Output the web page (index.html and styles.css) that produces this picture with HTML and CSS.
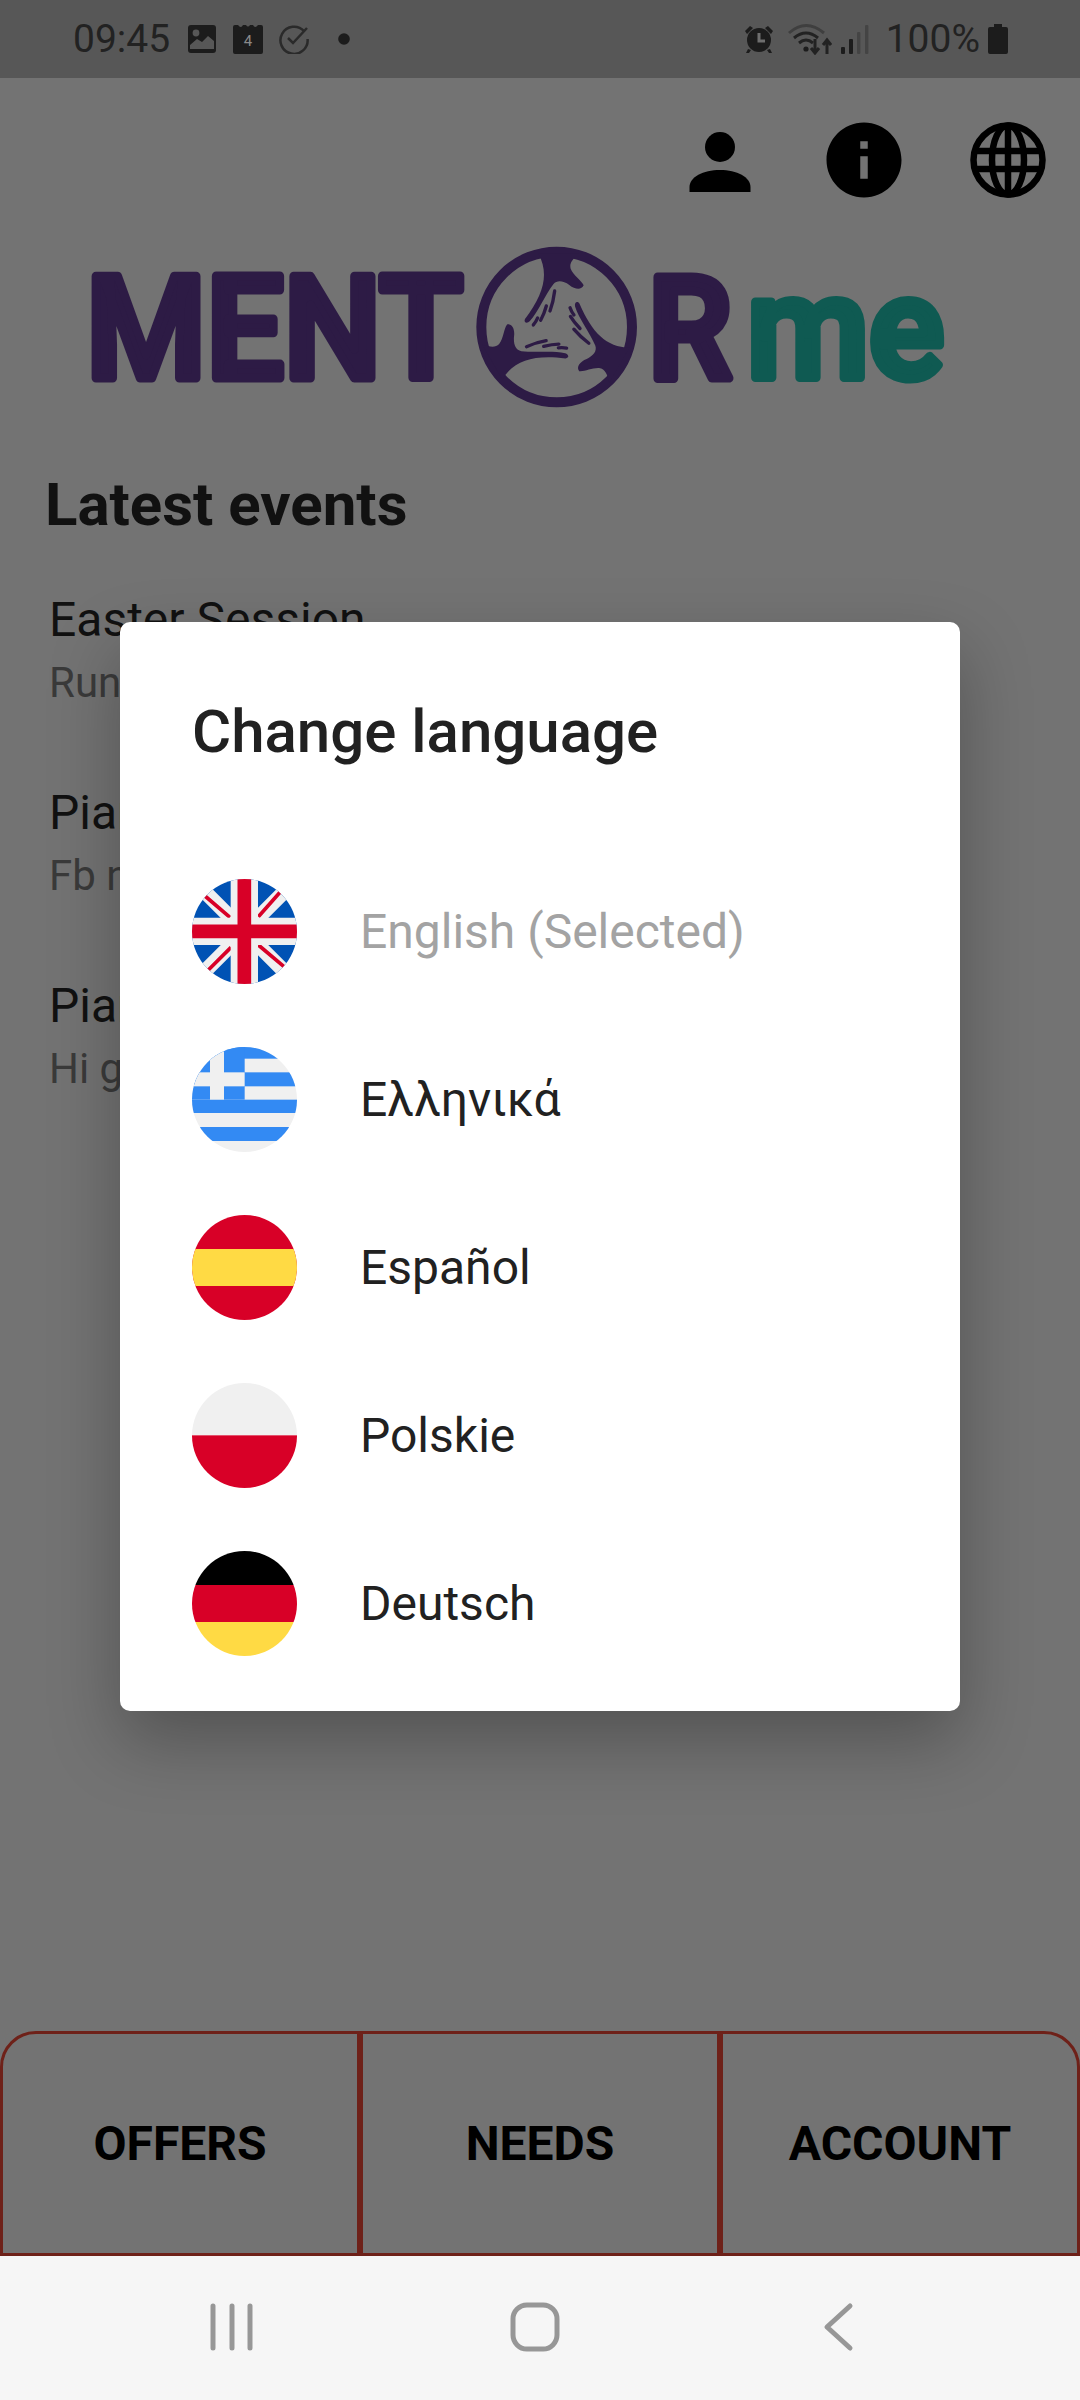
FILE: index.html
```html
<!DOCTYPE html>
<html lang="en">
<head>
    <meta charset="UTF-8">
    <meta name="viewport" content="width=device-width, initial-scale=1.0">
    <title>MENTORme</title>
    <link rel="stylesheet" href="styles.css">
</head>
<body>
    <div id="screen">
        <div class="status-bar">
            <div class="status-group">
                <span class="status-time">09:45</span>
                <svg class="status-icon" viewBox="0 0 30 30"><rect x="1" y="1" width="28" height="28" rx="3" class="ic-dark"/><circle cx="9" cy="9" r="3.4" class="ic-cut"/><path d="M3 25v-4l7-6 5 3 6-6 6 5v8z" class="ic-cut"/></svg>
                <svg class="status-icon" viewBox="0 0 30 30"><path d="M0 3q0-2 2-2h3q3 4 5 0h3q2 3 4 0h3q2 4 5 0h3q2 0 2 2v25q0 2-2 2H2q-2 0-2-2z" class="ic-dark"/><text x="15" y="22" class="cal-day">4</text></svg>
                <svg class="status-icon" viewBox="0 0 30 30"><path d="M25 7A13.6 13.6 0 1 0 28.6 15" class="ic-line"/><path d="M9 14l5 5L28 4" class="ic-line"/></svg>
                <svg class="status-dot" viewBox="0 0 12 12"><circle cx="6" cy="6" r="5.8" class="ic-dark"/></svg>
            </div>
            <div class="status-group">
                <svg class="status-icon" viewBox="0 0 30 30"><circle cx="15" cy="16" r="12" class="ic-dark"/><path d="M1 7l5-5 3 2-6 6zM29 7l-5-5-3 2 6 6zM4 25l-2 4h3l2-3zM26 25l2 4h-3l-2-3z" class="ic-dark"/><path d="M15 9v8h6" class="ic-mark"/></svg>
                <svg class="status-wifi" viewBox="0 0 44 32"><path d="M1 10Q18-5 36 10" class="ic-soft"/><path d="M6 15Q18 5 30 15M11 20Q18 14 25 20" class="ic-line2"/><circle cx="18" cy="26" r="2.6" class="ic-dark"/><path d="M27 16v13M23 25l4 5 4-5M39 31V18M35 22l4-5 4 5" class="ic-line2"/></svg>
                <svg class="status-signal" viewBox="0 0 28 30"><rect x="0" y="23" width="4" height="7" rx="1" class="ic-dark"/><rect x="8" y="15" width="4" height="15" rx="1" class="ic-dark"/><rect x="16" y="8" width="3.4" height="22" rx="1" class="ic-faint"/><rect x="24" y="1" width="3.4" height="29" rx="1" class="ic-faint"/></svg>
                <span class="status-pct">100%</span>
                <svg class="status-batt" viewBox="0 0 20 30"><path d="M6 0h8v3h4q2 0 2 2v23q0 2-2 2H2q-2 0-2-2V5q0-2 2-2h4z" class="ic-dark"/></svg>
            </div>
        </div>

        <div class="top-actions">
            <svg class="action" viewBox="0 0 90 90"><circle cx="45" cy="32" r="15"/><path d="M14.500 77V72C14.500 62 28 55 45 55S75.500 62 75.500 72V77z"/></svg>
            <svg class="action" viewBox="0 0 24 24"><path d="M12 2C6.480 2 2 6.480 2 12s4.480 10 10 10 10-4.480 10-10S17.520 2 12 2zm1 15h-2v-6h2v6zm0-8h-2V7h2v2z"/></svg>
            <svg class="action globe" viewBox="0 0 90 90"><circle cx="45" cy="45" r="34.500"/><ellipse cx="45" cy="45" rx="16" ry="34.500"/><path d="M45 10v70M12 36h66M12 54h66"/></svg>
        </div>

        <svg class="logo" viewBox="0 0 1080 200">
            <defs>
                <path id="hand" d="M205 40C238 100 222 160 165 236C160 248 172 250 179 243C205 215 225 165 250 132C262 118 280 122 298 134C315 148 335 150 341 135C335 120 310 105 302 85C298 70 305 60 325 40Z"/>
                <g id="hand-fingers">
                    <use href="#hand"/>
                    <path d="M254 152Q250 185 240 212M229 197Q222 222 212 240M203 233Q198 245 190 254" class="logo-finger"/>
                </g>
            </defs>
            <text x="86" y="162" textLength="377" lengthAdjust="spacingAndGlyphs" class="logo-word purple">MENT</text>
            <g transform="translate(470 24.300) scale(.3333)">
                <circle cx="260" cy="260" r="226" class="logo-ring"/>
                <use href="#hand-fingers"/>
                <use href="#hand-fingers" transform="rotate(120 260 260)"/>
                <use href="#hand-fingers" transform="rotate(240 260 260)"/>
            </g>
            <text x="648" y="162" textLength="84" lengthAdjust="spacingAndGlyphs" class="logo-word purple">R</text>
            <text x="747" y="162" textLength="197" lengthAdjust="spacingAndGlyphs" class="logo-word green">me</text>
        </svg>

        <h2 class="section-title">Latest events</h2>
        <div class="events">
            <div class="event">
                <div class="event-title">Easter Session</div>
                <div class="event-text">Run</div>
            </div>
            <div class="event">
                <div class="event-title">Pian</div>
                <div class="event-text">Fb n</div>
            </div>
            <div class="event">
                <div class="event-title">Pian</div>
                <div class="event-text">Hi g</div>
            </div>
        </div>

        <div class="tabs">
            <div class="tab tab-first">OFFERS</div>
            <div class="tab">NEEDS</div>
            <div class="tab tab-last">ACCOUNT</div>
        </div>

        <div class="nav-bar">
            <svg class="nav-icon" viewBox="0 0 50 50"><path d="M6 4v42M25 4v42M43 4v42"/></svg>
            <svg class="nav-icon" viewBox="0 0 50 50"><rect x="3" y="3" width="44" height="44" rx="14"/></svg>
            <svg class="nav-icon" viewBox="0 0 50 50"><path d="M37 4L14 25l23 21"/></svg>
        </div>

        <div class="dialog">
            <h3 class="dialog-title">Change language</h3>
            <div class="lang-row">
                <svg class="flag" viewBox="0 0 315 315">
                    <rect width="315" height="315" class="f-blue"/>
                    <path d="M0 0L315 315M315 0L0 315" class="f-diag"/>
                    <path d="M39 51L114 115M264 40L199 113M49 273L117 205M199 198L276 263" class="f-redthin"/>
                    <path d="M157 0V315M0 157H315" class="f-whitecross"/>
                    <path d="M157 0V315M0 157H315" class="f-redcross"/>
                </svg>
                <span class="lang-name selected">English (Selected)</span>
            </div>
            <div class="lang-row">
                <svg class="flag" viewBox="0 0 315 315">
                    <rect width="315" height="315" class="f-white"/>
                    <rect width="315" height="35" class="f-sky"/>
                    <rect y="76" width="315" height="42" class="f-sky"/>
                    <rect y="158" width="315" height="40" class="f-sky"/>
                    <rect y="240" width="315" height="42" class="f-sky"/>
                    <rect width="158" height="158" class="f-sky"/>
                    <rect x="54" width="42" height="158" class="f-white"/>
                    <rect y="76" width="158" height="42" class="f-white"/>
                </svg>
                <span class="lang-name">Ελληνικά</span>
            </div>
            <div class="lang-row">
                <svg class="flag" viewBox="0 0 315 315">
                    <rect width="315" height="315" class="f-red"/>
                    <rect y="102" width="315" height="111" class="f-yellow"/>
                </svg>
                <span class="lang-name">Español</span>
            </div>
            <div class="lang-row">
                <svg class="flag" viewBox="0 0 315 315">
                    <rect width="315" height="157" class="f-white"/>
                    <rect y="157" width="315" height="158" class="f-red"/>
                </svg>
                <span class="lang-name">Polskie</span>
            </div>
            <div class="lang-row">
                <svg class="flag" viewBox="0 0 315 315">
                    <rect width="315" height="102" class="f-black"/>
                    <rect y="102" width="315" height="111" class="f-red"/>
                    <rect y="213" width="315" height="102" class="f-yellow"/>
                </svg>
                <span class="lang-name">Deutsch</span>
            </div>
        </div>
    </div>
</body>
</html>
```

FILE: styles.css
```css
* {
    box-sizing: border-box;
}
body {
    margin: 0;
    font-family: Roboto, "Liberation Sans", sans-serif;
}
#screen {
    position: relative;
    width: 1080px;
    height: 2400px;
    overflow: hidden;
    background-color: #737373;
    display: flex;
    flex-direction: column;
}

/* status bar */
.status-bar {
    height: 78px;
    background-color: #575757;
    color: #222222;
    display: flex;
    justify-content: space-between;
    align-items: center;
    padding: 0 72px 0 73px;
}
.status-group {
    display: flex;
    align-items: center;
}
.status-time, .status-pct {
    font-size: 39px;
    line-height: 46px;
}
.status-time { margin-right: 17px; }
.status-icon { width: 30px; height: 30px; margin-right: 16px; }
.status-dot { width: 12px; height: 12px; margin-left: 13px; }
.status-wifi { width: 44px; height: 32px; margin-right: 9px; margin-left: -2px; }
.status-signal { width: 28px; height: 30px; margin-right: 17px; }
.status-pct { margin-right: 8px; }
.status-batt { width: 20px; height: 30px; }
.ic-dark { fill: #1c1c1c; }
.ic-cut { fill: #575757; }
.ic-faint { fill: #444444; }
.ic-line { fill: none; stroke: #2a2a2a; stroke-width: 2.500; }
.ic-line2 { fill: none; stroke: #222222; stroke-width: 3; }
.ic-soft { fill: none; stroke: #3f3f3f; stroke-width: 3; }
.ic-mark { fill: none; stroke: #6e6e6e; stroke-width: 3; }
.cal-day {
    font-size: 15px;
    text-anchor: middle;
    fill: #8a8a8a;
}

/* top icons */
.top-actions {
    display: flex;
    justify-content: flex-end;
    gap: 54px;
    padding: 37px 27px 0 0;
}
.action { width: 90px; height: 90px; fill: #000000; }
.globe { fill: none; stroke: #000000; stroke-width: 6.500; }

/* logo */
.logo {
    display: block;
    width: 1080px;
    height: 200px;
    margin-top: 11px;
}
.logo-word {
    font-size: 143px;
    font-weight: 500;
    stroke-width: 9px;
    stroke-linejoin: round;
}
.purple { fill: #2d1b45; stroke: #2d1b45; }
.green { fill: #0f5a52; stroke: #0f5a52; }
.logo-ring { fill: none; stroke: #2d1b45; stroke-width: 30; }
.logo-finger { fill: none; stroke: #2d1b45; stroke-width: 10; stroke-linecap: round; }
#hand { fill: #2d1b45; }

/* events list */
.section-title {
    margin: 54px 0 0 45px;
    font-size: 60px;
    line-height: 70px;
    font-weight: 700;
    color: #111111;
}
.events {
    margin: 52px 0 0 49px;
}
.event {
    height: 193px;
}
.event-title {
    font-size: 48px;
    line-height: 56px;
    color: #111111;
}
.event-text {
    margin-top: 10px;
    font-size: 42px;
    line-height: 50px;
    color: #3a3a3a;
}

/* bottom tabs */
.tabs {
    position: absolute;
    left: 0;
    right: 0;
    top: 2031px;
    display: flex;
}
.tab {
    flex: 1;
    height: 225px;
    border: 3px solid #6e2119;
    display: flex;
    justify-content: center;
    align-items: center;
    font-size: 48px;
    font-weight: 700;
    color: #000000;
}
.tab-first { border-top-left-radius: 36px; }
.tab-last { border-top-right-radius: 36px; }

/* android nav */
.nav-bar {
    position: absolute;
    left: 0;
    right: 0;
    bottom: 0;
    height: 144px;
    background-color: #f6f6f6;
    display: flex;
    align-items: center;
    padding-bottom: 2px;
}
.nav-icon {
    width: 50px;
    height: 50px;
    fill: none;
    stroke: #979797;
    stroke-width: 5;
    stroke-linecap: round;
    stroke-linejoin: round;
}
.nav-icon:nth-child(1) { margin-left: 207px; }
.nav-icon:nth-child(2) { margin-left: 253px; }
.nav-icon:nth-child(3) { margin-left: 253px; }

/* language dialog */
.dialog {
    position: absolute;
    left: 120px;
    top: 622px;
    width: 840px;
    height: 1089px;
    background-color: #ffffff;
    border-radius: 10px;
    box-shadow: 0 30px 70px rgba(0, 0, 0, 0.28);
    padding: 0 72px;
}
.dialog-title {
    margin: 0;
    height: 225px;
    padding-top: 75px;
    font-size: 60px;
    line-height: 70px;
    font-weight: 500;
    color: #212121;
}
.lang-row {
    height: 168px;
    display: flex;
    align-items: center;
    gap: 63px;
}
.flag {
    width: 105px;
    height: 105px;
    border-radius: 50%;
    flex-shrink: 0;
}
.lang-name {
    font-size: 48px;
    line-height: 56px;
    padding-top: 2px;
    color: #212121;
}
.lang-name.selected { color: #a3a3a3; }
.f-blue { fill: #0052b4; }
.f-white { fill: #f0f0f0; }
.f-red { fill: #d80027; }
.f-sky { fill: #338af3; }
.f-yellow { fill: #ffda44; }
.f-black { fill: #000000; }
.f-diag { fill: none; stroke: #f0f0f0; stroke-width: 44; }
.f-redthin { fill: none; stroke: #d80027; stroke-width: 11; }
.f-whitecross { fill: none; stroke: #f0f0f0; stroke-width: 82; }
.f-redcross { fill: none; stroke: #d80027; stroke-width: 41; }
```
